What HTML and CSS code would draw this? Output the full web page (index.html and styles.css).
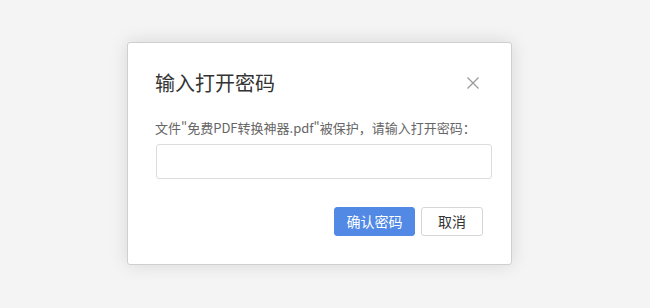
FILE: index.html
```html
<!DOCTYPE html>
<html lang="zh">
<head>
<meta charset="utf-8">
<link rel="stylesheet" href="styles.css">
</head>
<body>
<div class="page">
  <div class="dialog">
    <div class="header">
      <div class="title">输入打开密码</div>
      <svg class="close" width="12" height="12" viewBox="0 0 12 12"><path d="M0.5 0.5L11.5 11.5M11.5 0.5L0.5 11.5" stroke="#9a9a9a" stroke-width="1.3" fill="none"/></svg>
    </div>
    <div class="desc">文件"免费PDF转换神器.pdf"被保护，请输入打开密码：</div>
    <input class="pwd" type="password">
    <div class="footer">
      <button class="btn primary">确认密码</button>
      <button class="btn">取消</button>
    </div>
  </div>
</div>
</body>
</html>
```
FILE: styles.css
```css
html, body {
  margin: 0;
  padding: 0;
  background: #f4f4f4;
  font-family: "Noto Sans CJK SC", "Noto Sans", sans-serif;
}
.page {
  width: 650px;
  height: 308px;
  padding: 42px 0 0 127px;
  box-sizing: border-box;
}
.dialog {
  width: 385px;
  height: 223px;
  box-sizing: border-box;
  background: #fff;
  border: 1px solid #cfcfcf;
  border-radius: 3px;
  box-shadow: 0 0 18px rgba(0, 0, 0, 0.12);
  padding: 26px 19px 0 28px;
}
.header {
  display: flex;
  align-items: center;
  justify-content: space-between;
  height: 28px;
}
.title {
  font-size: 20px;
  line-height: 28px;
  color: #333;
  margin-left: -1px;
}
.close {
  margin-right: 13px;
  margin-top: 0;
}
.desc {
  margin-top: 21px;
  font-size: 13px;
  line-height: 20px;
  color: #666;
  margin-left: -1px;
}
.pwd {
  display: block;
  margin-top: 6px;
  width: 100%;
  height: 35px;
  box-sizing: border-box;
  border: 1px solid #dcdcdc;
  border-radius: 3px;
  outline: none;
}
.footer {
  display: flex;
  justify-content: flex-end;
  gap: 6px;
  margin-top: 28px;
  padding-right: 9px;
}
.btn {
  height: 29px;
  font-family: inherit;
  font-size: 14px;
  line-height: 27px;
  padding: 0 16px;
  border: 1px solid #d6d6d6;
  border-radius: 3px;
  background: #fff;
  color: #333;
}
.btn.primary {
  padding: 0 11.5px;
  background: #5189e5;
  border-color: #5189e5;
  color: #fff;
}
```
